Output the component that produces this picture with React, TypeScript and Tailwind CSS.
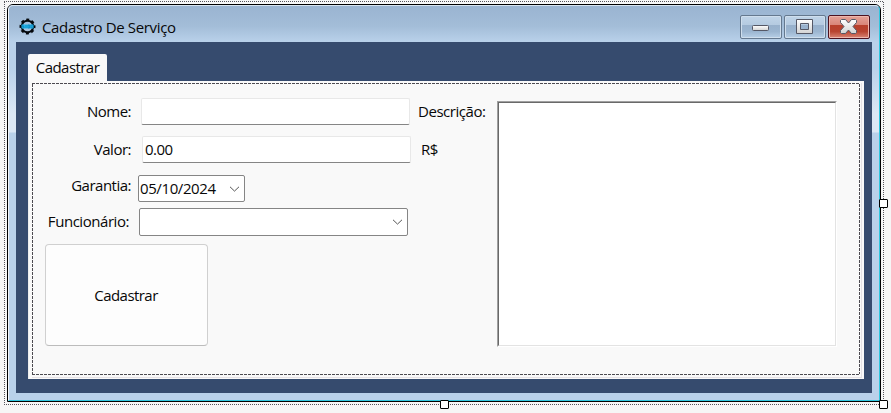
import type { ReactNode } from 'react';

const label = 'relative -top-px whitespace-nowrap text-right text-[15px] leading-[20px]';
const hDots = 'bg-[repeating-linear-gradient(90deg,#55555c_0_1px,transparent_1px_2px)]';
const vDots = 'bg-[repeating-linear-gradient(180deg,#55555c_0_1px,transparent_1px_2px)]';
const hDash = 'bg-[repeating-linear-gradient(90deg,#4c4a50_0_3px,transparent_3px_4px)]';
const vDash = 'bg-[repeating-linear-gradient(180deg,#4c4a50_0_3px,transparent_3px_4px)]';

function Frame({ h, v, children }: { h: string; v: string; children: ReactNode }) {
  return (
    <div className="grid h-full w-full grid-cols-[1px_minmax(0,1fr)_1px] grid-rows-[1px_minmax(0,1fr)_1px]">
      <div className={`col-span-3 ${h}`} />
      <div className={v} />
      {children}
      <div className={v} />
      <div className={`col-span-3 ${h}`} />
    </div>
  );
}

function GearIcon() {
  return (
    <svg width="18" height="18" viewBox="0 0 18 18" className="mt-[6px] shrink-0">
      <circle cx="8.500" cy="8.500" r="5.800" fill="none" stroke="#05080c" strokeWidth="2" />
      <circle cx="8.500" cy="8.500" r="7" fill="none" stroke="#05080c" strokeWidth="2" strokeDasharray="3 2.498" strokeDashoffset="1.500" />
      <path d="M2.500 6.500h12v4h-12z" fill="#22b4e8" />
      <path d="M5 7H3v1.500h2V10H3M7 7v3M9 7h1.500v3H9zM12 7h2v3h-2z" fill="none" stroke="#087bb3" strokeWidth=".6" />
    </svg>
  );
}

function TitleButton({ kind }: { kind: 'min' | 'max' | 'close' }) {
  const close = kind === 'close';
  return (
    <div
      className={`h-6 w-[42px] rounded-[2px] border ${
        close
          ? 'border-[#4d1220] bg-[linear-gradient(#e5a197_0,#d98679_40%,#b8402c_42%,#b8432f_70%,#d98575_100%)] shadow-[inset_0_0_0_1px_#edb7ad]'
          : 'border-[#65798f] bg-[linear-gradient(#c0d4e8_0,#b5cbe1_40%,#98b1cc_42%,#9bb5d0_70%,#b7cfe6_100%)] shadow-[inset_0_0_0_1px_#cfdeed]'
      }`}
    >
      <svg width="40" height="22" viewBox="0 0 40 22" className="block">
        <defs>
          <linearGradient id="glyph" x1="0" y1="0" x2="0" y2="1">
            <stop stopColor="#fff" />
            <stop offset="1" stopColor="#d3d3d3" />
          </linearGradient>
        </defs>
        {kind === 'min' && <rect x="11.5" y="9.5" width="16" height="5" rx="1" fill="url(#glyph)" stroke="#555866" />}
        {kind === 'max' && (
          <path d="M11.5 3.5h16v14h-16zM15.5 7.5v6h8v-6z" fill="url(#glyph)" fillRule="evenodd" stroke="#555866" strokeLinejoin="round" />
        )}
        {close && (
          <path
            d="M12.500 3.500h4l3 3.500 3-3.500h4l1 1v2l-3.500 4 3.500 4v2l-1 1h-4l-3-3.500-3 3.500h-4l-1-1v-2l3.500-4-3.500-4v-2z"
            fill="url(#glyph)"
            stroke="#555866"
            strokeLinejoin="round"
          />
        )}
      </svg>
    </div>
  );
}

function Chevron() {
  return (
    <svg width="11" height="6" viewBox="0 0 11 6" className="shrink-0">
      <path d="M1 .8 5.500 5.100 10 .8" fill="none" stroke="#555" strokeWidth="1" />
    </svg>
  );
}

const field = 'h-[27px] w-[269px] rounded-[2px] border border-[#e8e8e8] border-b-[#858585] bg-white';

function Form() {
  return (
    <div className="flex bg-[#f9f9f9]">
      <div className="w-[464px] shrink-0 pt-[14px]">
        <div className="flex h-[27px] items-center">
          <span className={`w-[98px] tracking-[-0.5px] ${label}`}>Nome:</span>
          <div className={`ml-[10px] ${field}`} />
          <span className={`ml-2 tracking-[-0.45px] ${label}`}>Descrição:</span>
        </div>
        <div className="mt-[11px] flex h-[27px] items-center">
          <span className={`w-[98px] tracking-[-0.5px] ${label}`}>Valor:</span>
          <div className={`ml-[11px] flex items-center pl-[2px] text-[15px] tracking-[-0.5px] ${field}`}>0.00</div>
          <span className={`ml-[10px] tracking-[-0.5px] ${label}`}>R$</span>
        </div>
        <div className="mt-3 flex h-[27px] items-start">
          <span className={`mt-px w-[98px] tracking-[-0.5px] ${label}`}>Garantia:</span>
          <div className="ml-[7px] flex h-[27px] w-[107px] items-center justify-between rounded-[2px] border border-[#858585] bg-white pl-px pr-[4px] text-[15px] tracking-[-0.4px]">
            <span>05/10/2024</span>
            <Chevron />
          </div>
        </div>
        <div className="mt-[6px] flex h-7 items-center">
          <span className={`w-[96px] tracking-[-0.45px] ${label}`}>Funcionário:</span>
          <div className="ml-[10px] flex h-7 w-[269px] items-center justify-end rounded-[2px] border border-[#858585] bg-white pr-[4px]">
            <Chevron />
          </div>
        </div>
        <button className="ml-3 mt-2 block h-[102px] w-[163px] rounded-[4px] border border-[#d0d0d0] border-b-[#bcbcbc] bg-[#fdfdfd] pr-px text-[15px] tracking-[-0.55px]">
          Cadastrar
        </button>
      </div>
      <div className="mt-[17px] h-[246px] w-[340px] border border-b-white border-l-[#a0a0a0] border-r-white border-t-[#a0a0a0]">
        <div className="h-full w-full border border-b-[#e3e3e3] border-l-[#696969] border-r-[#e3e3e3] border-t-[#696969] bg-white" />
      </div>
    </div>
  );
}

export default function App() {
  return (
    <div className="relative h-[413px] w-[891px] overflow-hidden bg-[#f6f6f6] pl-[4px] pt-px font-['Open_Sans','Noto_Sans',sans-serif] text-[#080808]">
      <div className="h-[404px] w-[880px]">
        <Frame h={hDots} v={vDots}>
          <div className="p-[2px]">
            <div className="h-[398px] w-[874px] rounded-t-[6px] border border-black bg-[#b9d1ea]">
              <div className="flex h-full w-full flex-col rounded-t-[5px] border-b border-l border-r border-t border-b-[#2fc7df] border-l-[#f3f7fb] border-r-[#2fc7df] border-t-[#d7e4f0] bg-[linear-gradient(#9ab4d1_0,#a3bdd8_20px,#b9d1ea_36px,#b9d1ea_62px,#dce8f5_108px,#dce8f5_126px,#b9d1ea_127px)] pl-[7px] pr-[7px]">
                <div className="flex h-9 shrink-0 items-center pl-[3px]">
                  <GearIcon />
                  <span className="ml-[5px] mt-[9px] h-[26px] text-[15px] tracking-[-0.35px]">Cadastro De Serviço</span>
                  <div className="ml-auto mr-[2px] flex gap-[2px] pt-[6px]">
                    <TitleButton kind="min" />
                    <TitleButton kind="max" />
                    <TitleButton kind="close" />
                  </div>
                </div>
                <div className="h-[351px] w-[856px] bg-[#364b6e] pl-3 pt-3">
                  <div className="flex h-[27px] w-[79px] items-center justify-center rounded-t-[2px] bg-[#f9f9f9] text-[15px] tracking-[-0.55px]">
                    Cadastrar
                  </div>
                  <div className="h-[298px] w-[836px] bg-[#f9f9f9] pb-px pl-1 pr-1 pt-[2px] shadow-[inset_1px_0_#ededed]">
                    <div className="h-[295px] w-[830px] border-b border-r border-[#e5e1e5] pb-[2px] pr-px">
                      <Frame h={hDash} v={vDash}>
                        <Form />
                      </Frame>
                    </div>
                  </div>
                </div>
              </div>
            </div>
          </div>
        </Frame>
      </div>
      <div className="absolute left-[879px] top-[199px] h-[9px] w-[9px] rounded-[1px] border border-black bg-white" />
      <div className="absolute left-[440px] top-[400px] h-[9px] w-[9px] rounded-[1px] border border-black bg-white" />
      <div className="absolute left-[879px] top-[400px] h-[9px] w-[9px] rounded-[1px] border border-black bg-white" />
    </div>
  );
}
